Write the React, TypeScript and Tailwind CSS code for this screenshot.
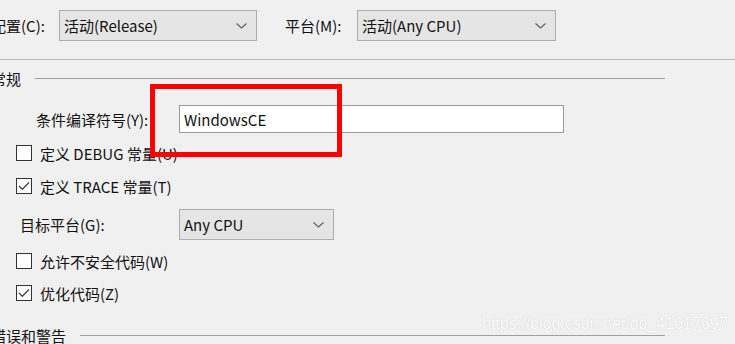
import React from "react";

const FONT = { fontFamily: '"Noto Sans CJK SC", "Noto Sans", sans-serif' };

function Chevron() {
  return (
    <svg width="11" height="6" viewBox="0 0 11 6" className="shrink-0">
      <path d="M0.5 0.5 L5.5 5 L10.5 0.5" fill="none" stroke="#606060" strokeWidth="1.2" />
    </svg>
  );
}

function Select({ text, w }: { text: string; w: string }) {
  return (
    <div className={`${w} h-[31px] flex items-center justify-between border border-[#adadad] bg-[#e5e5e5] pl-[4px] pr-[9px] text-[15px] text-[#111]`}>
      <span className="leading-none">{text}</span>
      <Chevron />
    </div>
  );
}

function Check({ checked, label }: { checked?: boolean; label: string }) {
  return (
    <div className="flex h-[16px] items-center">
      <div className="ml-[16px] w-[16px] h-[16px] border border-[#333] bg-white flex items-center justify-center">
        {checked && (
          <svg width="12" height="10" viewBox="0 0 12 10">
            <path d="M1 5 L4.3 8.3 L11 1.5" fill="none" stroke="#404040" strokeWidth="1.3" />
          </svg>
        )}
      </div>
      <span className="ml-[8px] text-[15px] text-[#111] leading-none whitespace-nowrap">{label}</span>
    </div>
  );
}

function Header({ text, lineStart }: { text: string; lineStart: string }) {
  return (
    <div className="flex h-full items-center">
      <span className={`-ml-[9px] text-[15px] text-[#111] leading-none whitespace-nowrap ${lineStart}`}>{text}</span>
      <div className="flex-1 mr-[70px] h-px bg-[#a0a0a0]" />
    </div>
  );
}

export default function App() {
  return (
    <div className="relative w-[735px] h-[344px] overflow-hidden bg-[#f0f0f0]" style={FONT}>
      {/* top row */}
      <div className="h-[60px] pt-[10px] border-b border-[#b9b9b9]">
        <div className="flex items-center h-[31px]">
          <span className="-ml-[9px] w-[68px] text-[15px] text-[#111] leading-none whitespace-nowrap">配置(C):</span>
          <Select text="活动(Release)" w="w-[198px]" />
          <span className="ml-[28px] w-[72px] text-[15px] text-[#111] leading-none whitespace-nowrap">平台(M):</span>
          <Select text="活动(Any CPU)" w="w-[199px]" />
        </div>
      </div>

      {/* 常规 */}
      <div className="h-[36px]">
        <Header text="常规" lineStart="w-[44px]" />
      </div>

      <div className="mt-[9px] h-[28px] flex items-center">
        <span className="ml-[36px] w-[143px] text-[15px] text-[#111] leading-none whitespace-nowrap">条件编译符号(Y):</span>
        <div className="w-[385px] h-[28px] bg-white border border-[#9a9a9a] flex items-center pl-[4px] text-[15px] text-[#111]">
          <span className="leading-none">WindowsCE</span>
        </div>
      </div>

      <div className="mt-[12px]">
        <Check label="定义 DEBUG 常量(U)" />
      </div>
      <div className="mt-[17px]">
        <Check checked label="定义 TRACE 常量(T)" />
      </div>

      <div className="mt-[15px] h-[31px] flex items-center">
        <span className="ml-[20px] w-[159px] text-[15px] text-[#111] leading-none whitespace-nowrap">目标平台(G):</span>
        <Select text="Any CPU" w="w-[155px]" />
      </div>

      <div className="mt-[13px]">
        <Check label="允许不安全代码(W)" />
      </div>
      <div className="mt-[16px]">
        <Check checked label="优化代码(Z)" />
      </div>

      <div className="mt-[24px] h-[20px]">
        <Header text="错误和警告" lineStart="w-[89px]" />
      </div>

      {/* red highlight box */}
      <div className="absolute left-[150px] top-[84px] w-[192px] h-[73px] border-[5px] border-[#ff0000]" />

      {/* watermark */}
      <div
        className="absolute left-[482px] top-[316px] text-[16px] leading-none text-white whitespace-nowrap"
        style={{ fontFamily: '"Liberation Sans", Arial, sans-serif', textShadow: "0 0 1px rgba(120,120,120,0.45)" }}
      >
        https://blog.csdn.net/qq_41617697
      </div>
    </div>
  );
}
